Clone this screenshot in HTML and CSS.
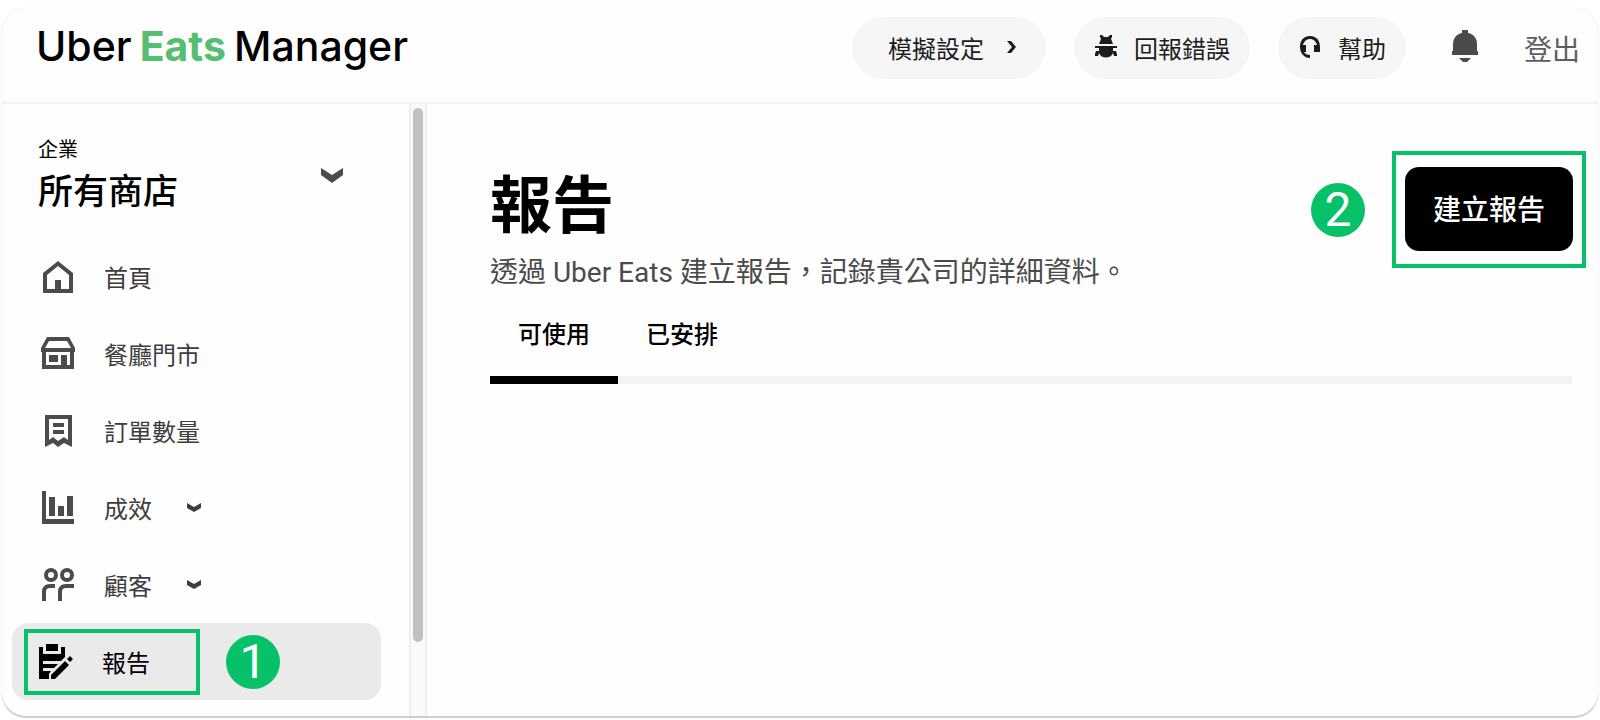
FILE: index.html
```
<!DOCTYPE html>
<html lang="zh-Hant">
<head>
	<meta charset="utf-8">
	<title>Uber Eats Manager</title>
	<link rel="stylesheet" href="styles.css">
</head>
<body>
<div class="window">
	<header class="topbar">
		<a href="#" class="logo"><span>Uber</span> <b>Eats</b> <span>Manager</span></a>
		<nav class="actions">
			<button type="button" class="pill pill-wide">模擬設定
				<svg class="arrow" width="12" height="16" viewBox="0 0 12 16"><path d="M1 2h4l5 6-5 6H1l5-6z"/></svg>
			</button>
			<button type="button" class="pill">
				<svg width="24" height="24" viewBox="0 0 24 24"><path d="M6 0h2l2 2h4l2-2h2v2l-1 2 2 5H5l2-5-1-2zM1 11h22v2h-4v3h3l1 3v2h-3l-1-3c-2 6-12 6-14 0l-1 3H1v-2l1-3h3v-3H1z"/></svg>
				回報錯誤
			</button>
			<button type="button" class="pill">
				<svg width="24" height="24" viewBox="0 0 24 24"><path d="M12 1C5 1 2 6 2 12s4 11 10 11v-3c-3 0-5-1-6-3h2v-7H5c1-4 4-6 7-6s6 2 7 6h-3v7h6v-5C22 6 19 1 12 1z"/></svg>
				幫助
			</button>
			<button type="button" class="bell" aria-label="通知">
				<svg width="26" height="32" viewBox="0 0 26 32"><path d="M10 0h6v3c6 1 9 6 9 11v7h1v4H0v-4h1v-7C1 9 4 4 10 3zM7 28h12l-4 4h-4z"/></svg>
			</button>
			<a href="#" class="logout">登出</a>
		</nav>
	</header>

	<div class="columns">
		<aside class="sidebar">
			<div class="sidebar-content">
				<button type="button" class="store">
					<span class="store-text"><small>企業</small><strong>所有商店</strong></span>
					<svg width="22" height="15" viewBox="0 0 22 15"><path d="M0 0l11 7 11-7v7l-11 8L0 7z"/></svg>
				</button>
				<ul class="menu">
					<li><a href="#">
						<svg class="icon" width="36" height="36" viewBox="0 0 36 36"><path fill-rule="evenodd" d="M18 2l15 12v20H3V14zM18 7L7 16v14h8v-9h6v9h8V16z"/></svg>
						首頁
					</a></li>
					<li><a href="#">
						<svg class="icon" width="36" height="36" viewBox="0 0 36 36"><path fill-rule="evenodd" d="M7 1h22l6 11v4h-1v17H2V16H1v-4zM9 5l-4 7h26l-4-7zM6 16v13h15V19h6v10h3V16zM9 19h9v7H9z"/></svg>
						餐廳門市
					</a></li>
					<li><a href="#">
						<svg class="icon" width="36" height="36" viewBox="0 0 36 36"><path fill-rule="evenodd" d="M5 2h27v32l-8-4-6 4-5-4-8 4zM9 6v21l4-3 5 4 6-4 4 3V6zM13 10h11v4H13zM13 17h11v4H13z"/></svg>
						訂單數量
					</a></li>
					<li><a href="#">
						<svg class="icon" width="36" height="36" viewBox="0 0 36 36"><path d="M2 1h4v28h28v5H2zM9 7h6v19H9zM18 16h6v10h-6zM27 6h6v20h-6z"/></svg>
						成效
						<svg class="chevron" width="14" height="10" viewBox="0 0 14 10"><path d="M0 0l7 4 7-4v5l-7 4-7-4z"/></svg>
					</a></li>
					<li><a href="#">
						<svg class="icon line" width="36" height="36" viewBox="0 0 36 36"><circle cx="11" cy="8" r="5"/><circle cx="27" cy="8" r="5"/><path d="M4 34V25q0-6 6-6h5M20 34V25q0-6 6-6h8"/></svg>
						顧客
						<svg class="chevron" width="14" height="10" viewBox="0 0 14 10"><path d="M0 0l7 4 7-4v5l-7 4-7-4z"/></svg>
					</a></li>
					<li class="current"><a href="#" class="marked">
						<svg class="icon" width="36" height="36" viewBox="0 0 36 36"><path d="M8 0h12v7H8zM1 3h4v7h18V3h4v10l-4 4H5v3h15l-4 4H5v3h8l-2 3v5H1zM13 31l14-14 4 4-14 14h-4zM32 12l3 3-3 3-3-3z"/></svg>
						報告
					</a><span class="step">1</span></li>
				</ul>
			</div>
			<div class="scrollbar"><div class="thumb"></div></div>
		</aside>

		<main class="main">
			<div class="heading">
				<div>
					<h1>報告</h1>
					<p>透過 Uber Eats 建立報告，記錄貴公司的詳細資料。</p>
				</div>
				<div class="create">
					<span class="step">2</span>
					<div class="create-box"><button type="button">建立報告</button></div>
				</div>
			</div>
			<div class="tabs" role="tablist">
				<button type="button" role="tab" aria-selected="true">可使用</button>
				<button type="button" role="tab" aria-selected="false">已安排</button>
			</div>
		</main>
	</div>
</div>
</body>
</html>
```

FILE: styles.css
```
* {
	box-sizing: border-box;
}
body {
	margin: 0;
	padding: 8px 2px 4px;
	height: 100vh;
	background: #fff;
	color: #000;
	font-family: Roboto, "Noto Sans CJK TC", sans-serif;
	font-size: 24px;
}
button {
	border: 0;
	padding: 0;
	background: none;
	font: inherit;
	color: inherit;
}
a {
	color: inherit;
	text-decoration: none;
}
svg {
	display: block;
	fill: currentColor;
	flex: none;
}
.window {
	display: flex;
	flex-direction: column;
	height: 100%;
	overflow: hidden;
	border-radius: 24px;
	background: #fefefe;
	box-shadow: 0 2px 1px #ccc, 0 0 1px #ddd;
}
.topbar {
	display: flex;
	justify-content: space-between;
	align-items: center;
	padding: 9px 18px 23px 34px;
	border-bottom: 2px solid #f2f2f2;
}
.logo {
	display: flex;
	gap: 8px;
	padding-bottom: 4px;
	font-family: Inter, sans-serif;
	font-size: 41px;
	line-height: 56px;
	font-weight: 500;
}
.logo b {
	color: #56be70;
	font-weight: 700;
}
.actions {
	display: flex;
	align-items: center;
	gap: 28px;
}
.pill {
	display: flex;
	align-items: center;
	gap: 16px;
	height: 62px;
	padding: 0 20px 2px;
	border-radius: 31px;
	background: #f6f6f6;
	color: #1c1c1c;
}
.pill-wide {
	gap: 22px;
	padding: 0 28px 2px 36px;
}
.bell {
	margin: 0 18px;
	padding-bottom: 4px;
	color: #4b4b4b;
}
.logout {
	font-size: 28px;
	color: #5e5e5e;
}
.columns {
	display: flex;
	flex: 1;
	min-height: 0;
}
.sidebar {
	display: flex;
	flex: none;
	width: 425px;
}
.sidebar-content {
	flex: 1;
	padding: 28px 28px 0 10px;
}
.store {
	display: flex;
	justify-content: space-between;
	align-items: center;
	width: 100%;
	padding: 0 38px 0 26px;
	margin-bottom: 20px;
	text-align: left;
}
.store svg {
	color: #4b4b4b;
}
.store small {
	display: block;
	font-size: 20px;
	line-height: 36px;
}
.store strong {
	display: block;
	font-size: 35px;
	line-height: 50px;
	font-weight: 500;
}
.menu {
	list-style: none;
	margin: 0;
	padding: 0;
}
.menu li {
	display: flex;
	align-items: center;
	height: 77px;
	padding-left: 12px;
	color: #3d3d3d;
}
.menu a {
	display: flex;
	align-items: center;
	height: 66px;
	padding-left: 16px;
}
.icon {
	margin-right: 28px;
	color: #4b4b4b;
}
.icon.line {
	fill: none;
	stroke: currentColor;
	stroke-width: 4;
}
.chevron {
	margin-left: 35px;
}
.menu .current {
	border-radius: 16px;
	background: #eaeaea;
	color: #000;
}
.menu .marked {
	width: 176px;
	padding-left: 10px;
	border: 4px solid #06c167;
}
.marked .icon {
	color: #000;
}
.step {
	display: inline-block;
	width: 54px;
	height: 54px;
	border-radius: 50%;
	background: #06c167;
	color: #fff;
	font-size: 48px;
	line-height: 54px;
	text-align: center;
}
.current .step {
	margin-left: 26px;
}
.scrollbar {
	width: 18px;
	padding: 4px 2px;
	border: solid #eee;
	border-width: 0 2px;
	background: #fafafa;
}
.thumb {
	height: 534px;
	border-radius: 5px;
	background: #c1c1c1;
}
.main {
	flex: 1;
	padding: 47px 26px 0 63px;
}
.heading {
	display: flex;
	justify-content: space-between;
	align-items: flex-start;
}
h1 {
	margin: 16px 0 0;
	font-size: 62px;
	line-height: 80px;
	font-weight: 700;
}
p {
	margin: 6px 0 0;
	font-size: 28px;
	line-height: 40px;
	color: #4b4b4b;
}
.create {
	display: flex;
	align-items: center;
	gap: 27px;
	margin-right: -14px;
}
.create-box {
	padding: 12px 9px 13px;
	border: 4px solid #06c167;
}
.create-box button {
	height: 84px;
	padding: 0 28px 2px;
	border-radius: 14px;
	background: #000;
	color: #fff;
	font-size: 28px;
	font-weight: 500;
}
.tabs {
	display: flex;
	margin-top: 11px;
	border-bottom: 8px solid #f3f3f3;
}
.tabs button {
	height: 80px;
	margin-bottom: -8px;
	padding: 0 28px 16px;
	border-bottom: 8px solid transparent;
	font-weight: 500;
}
.tabs [aria-selected="true"] {
	border-color: #000;
}
```
